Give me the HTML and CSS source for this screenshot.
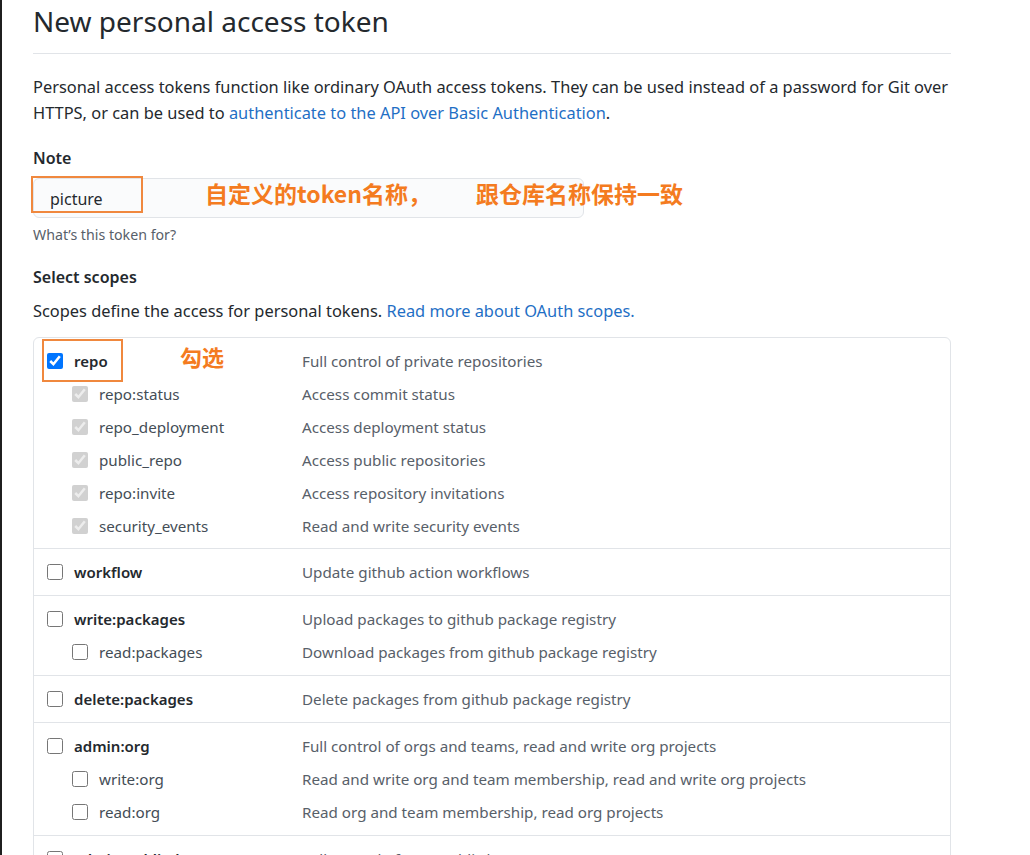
FILE: index.html
```html
<!DOCTYPE html>
<html lang="en">
<head>
<meta charset="utf-8">
<title>New personal access token</title>
<link rel="stylesheet" href="styles.css">
</head>
<body>
<div class="page">
  <div class="content">
    <h1 class="title">New personal access token</h1>
    <p class="intro">Personal access tokens function like ordinary OAuth access tokens. They can be used instead of a password for Git over HTTPS, or can be used to <a href="#">authenticate to the API over Basic Authentication</a>.</p>

    <div class="field">
      <div class="field-label">Note</div>
      <div class="note-wrap">
        <div class="note-input">picture</div>
        <div class="mark mark-note"></div>
        <div class="anno anno-1">自定义的token名称，</div>
        <div class="anno anno-2">跟仓库名称保持一致</div>
      </div>
      <div class="hint">What’s this token for?</div>
    </div>

    <div class="field">
      <div class="field-label">Select scopes</div>
      <p class="scopes-desc">Scopes define the access for personal tokens. <a href="#">Read more about OAuth scopes.</a></p>

      <div class="scopes">
        <div class="group">
          <div class="row main">
            <label class="name"><input type="checkbox" checked><span>repo</span></label>
            <span class="desc">Full control of private repositories</span>
            <div class="mark mark-repo"></div>
            <div class="anno anno-3">勾选</div>
          </div>
          <div class="row sub">
            <label class="name"><input type="checkbox" checked disabled><span>repo:status</span></label>
            <span class="desc">Access commit status</span>
          </div>
          <div class="row sub">
            <label class="name"><input type="checkbox" checked disabled><span>repo_deployment</span></label>
            <span class="desc">Access deployment status</span>
          </div>
          <div class="row sub">
            <label class="name"><input type="checkbox" checked disabled><span>public_repo</span></label>
            <span class="desc">Access public repositories</span>
          </div>
          <div class="row sub">
            <label class="name"><input type="checkbox" checked disabled><span>repo:invite</span></label>
            <span class="desc">Access repository invitations</span>
          </div>
          <div class="row sub">
            <label class="name"><input type="checkbox" checked disabled><span>security_events</span></label>
            <span class="desc">Read and write security events</span>
          </div>
        </div>

        <div class="group">
          <div class="row main">
            <label class="name"><input type="checkbox"><span>workflow</span></label>
            <span class="desc">Update github action workflows</span>
          </div>
        </div>

        <div class="group">
          <div class="row main">
            <label class="name"><input type="checkbox"><span>write:packages</span></label>
            <span class="desc">Upload packages to github package registry</span>
          </div>
          <div class="row sub">
            <label class="name"><input type="checkbox"><span>read:packages</span></label>
            <span class="desc">Download packages from github package registry</span>
          </div>
        </div>

        <div class="group">
          <div class="row main">
            <label class="name"><input type="checkbox"><span>delete:packages</span></label>
            <span class="desc">Delete packages from github package registry</span>
          </div>
        </div>

        <div class="group">
          <div class="row main">
            <label class="name"><input type="checkbox"><span>admin:org</span></label>
            <span class="desc">Full control of orgs and teams, read and write org projects</span>
          </div>
          <div class="row sub">
            <label class="name"><input type="checkbox"><span>write:org</span></label>
            <span class="desc">Read and write org and team membership, read and write org projects</span>
          </div>
          <div class="row sub">
            <label class="name"><input type="checkbox"><span>read:org</span></label>
            <span class="desc">Read org and team membership, read org projects</span>
          </div>
        </div>

        <div class="group">
          <div class="row main">
            <label class="name"><input type="checkbox"><span>admin:public_key</span></label>
            <span class="desc">Full control of user public keys</span>
          </div>
          <div class="row sub">
            <label class="name"><input type="checkbox"><span>write:public_key</span></label>
            <span class="desc">Write user public keys</span>
          </div>
        </div>
      </div>
    </div>
  </div>
</div>
</body>
</html>
```

FILE: styles.css
```css
* { box-sizing: border-box; }

html, body {
  margin: 0;
  padding: 0;
  background: #ffffff;
}

body {
  font-family: "Noto Sans", "Open Sans", "Noto Sans CJK SC", sans-serif;
  font-size: 16px;
  color: #24292e;
  overflow: hidden;
}

.page {
  border-left: 2px solid #1f1f1f;
  min-height: 855px;
  padding-left: 31px;
}

.content {
  width: 918px;
  padding-top: 3px;
}

a {
  color: #1f6fc5;
  text-decoration: none;
}

.title {
  margin: 0;
  font-size: 28px;
  font-weight: 400;
  line-height: 36px;
  padding-bottom: 14px;
  border-bottom: 1px solid #e1e4e8;
}

.intro {
  margin: 20px 0 0;
  font-size: 16.4px;
  line-height: 26px;
}

.field {
  margin-top: 19px;
}

.field-label {
  font-weight: 600;
  line-height: 26px;
}

.note-wrap {
  position: relative;
  margin-top: 7px;
  width: 551px;
}

.note-input {
  height: 40px;
  border: 1px solid #e1e4e8;
  border-radius: 6px;
  background: #fafbfc;
  padding: 7px 16px 0;
  line-height: 26px;
}

.mark {
  position: absolute;
  border: 2px solid #f0883e;
  pointer-events: none;
}

.mark-note {
  left: -2px;
  top: -2px;
  width: 112px;
  height: 37px;
}

.anno {
  position: absolute;
  font-family: "Noto Sans CJK SC", sans-serif;
  font-weight: 700;
  color: #f47b20;
  white-space: nowrap;
  line-height: 30px;
  font-size: 23px;
}

.anno-1 {
  left: 172px;
  top: 0;
}

.anno-2 {
  left: 443px;
  top: 0;
}

.hint {
  margin-top: 7px;
  font-size: 14.2px;
  line-height: 20px;
  color: #586069;
}

.scopes-desc {
  margin: 8px 0 0;
  font-size: 16.4px;
  line-height: 26px;
}

.scopes {
  margin-top: 13px;
  border: 1px solid #e1e4e8;
  border-radius: 6px;
}

.group {
  padding: 6px 0 7px;
  border-top: 1px solid #e1e4e8;
}

.group:first-child {
  padding-bottom: 6px;
  border-top: 0;
}

.row {
  position: relative;
  display: grid;
  grid-template-columns: 268px 1fr;
  align-items: center;
  height: 33px;
  font-size: 15.2px;
}

.name {
  display: flex;
  align-items: center;
  gap: 11px;
}

.main .name {
  padding-left: 13px;
  font-weight: 600;
  font-size: 15px;
}

.sub .name {
  padding-left: 38px;
  color: #444d56;
}

.name input {
  width: 16px;
  height: 16px;
  margin: 0;
}

.desc {
  color: #586069;
}

.mark-repo {
  left: 8px;
  top: -5px;
  width: 81px;
  height: 43px;
}

.anno-3 {
  left: 146px;
  top: -3px;
  font-size: 22px;
}
```
